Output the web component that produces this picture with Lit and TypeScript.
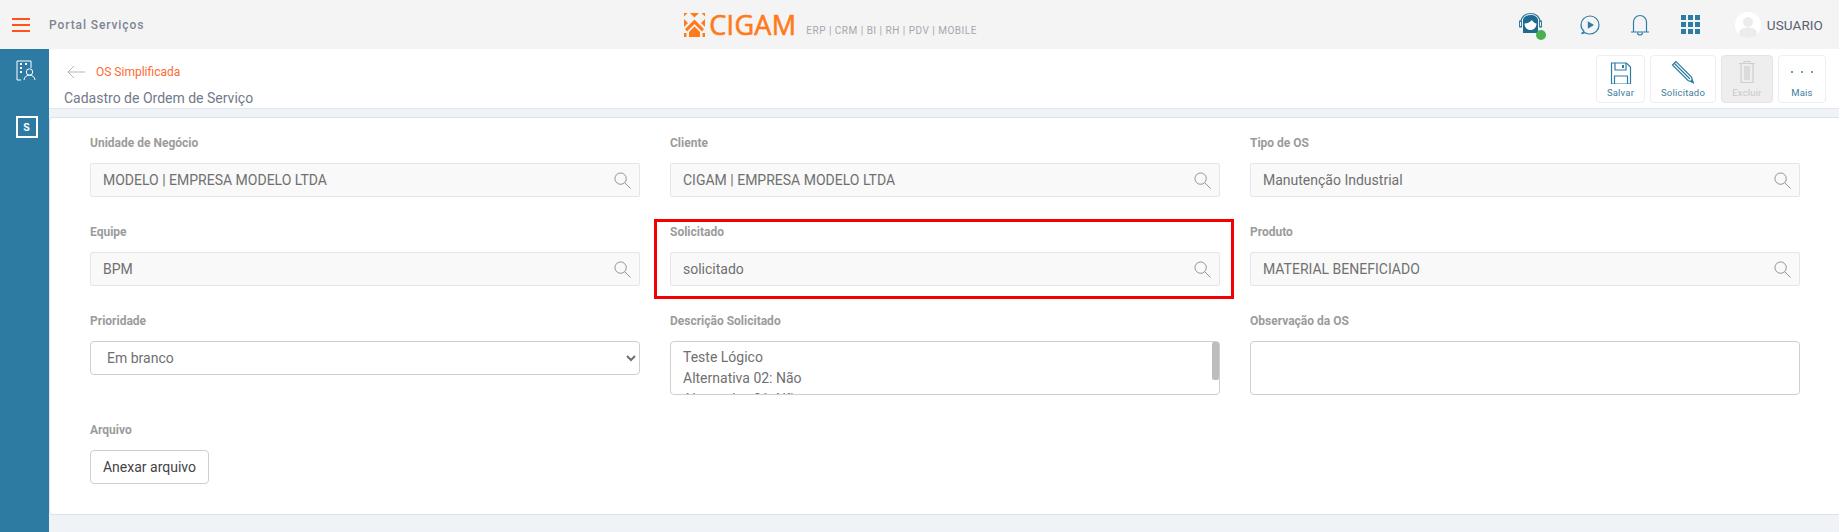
import { LitElement, html, css } from "lit";
import { customElement } from "lit/decorators.js";

const searchIcon = html`<svg class="search" viewBox="0 0 18 18" width="17" height="17" fill="none" stroke="#8c8c8c" stroke-width="1"><circle cx="7" cy="7" r="6"/><path d="M11.5 11.5 17.5 17.5"/></svg>`;

@customElement("app-root")
export class AppRoot extends LitElement {
  static styles = css`
    :host { display: block; width: 1839px; height: 532px; overflow: hidden; position: relative; font-family: Roboto, "Liberation Sans", sans-serif; background: #eff3f8; }
    * { box-sizing: border-box; }
    .topbar { height: 49px; background: #f4f4f4; display: flex; align-items: center; position: relative; }
    .burger { width: 18px; margin-left: 12px; display: flex; flex-direction: column; gap: 4px; }
    .burger i { display: block; height: 2px; background: #ff5317; }
    .title { margin-left: 19px; font-size: 12px; font-weight: 500; letter-spacing: 0.9px; color: #7d8492; }
    .brand { margin-left: 540px; display: flex; align-items: center; }
    .wordmark { font-family: "Open Sans", sans-serif; font-size: 27px; line-height: 27px; letter-spacing: 0.3px; color: #ff7a1a; margin-left: 4px; font-weight: 400; -webkit-text-stroke: 0.6px #ff7a1a; }
    .modules { margin-left: 10px; margin-top: 11px; font-size: 10px; letter-spacing: 0.5px; color: #a4a7ae; font-weight: 400; white-space: nowrap; }
    .tools { margin-left: auto; display: flex; align-items: center; }
    .agent { position: relative; width: 26px; height: 26px; margin-right: 36px; }
    .dot { position: absolute; left: 18px; top: 18px; width: 10px; height: 10px; border-radius: 50%; background: #4caf50; }
    .play { margin-right: 30px; }
    .bell { margin-right: 31px; }
    .apps { display: grid; grid-template-columns: repeat(3, 5px); grid-auto-rows: 5px; gap: 2px; margin-right: 35px; }
    .apps i { background: #2d7ca3; }
    .avatar { width: 26px; height: 26px; border-radius: 50%; background: #fff; overflow: hidden; margin-right: 6px; }
    .user { font-size: 13.5px; letter-spacing: 0.1px; color: #5a6070; margin-right: 16px; }

    .shell { display: flex; height: 483px; }
    .rail { width: 49px; background: #2d7ba3; display: flex; flex-direction: column; align-items: center; padding: 11px 0 0 4px; flex: none; }
    .s-box { margin-top: 35px; width: 22px; height: 22px; border: 2px solid #fff; color: #fff; font-size: 10px; font-weight: 700; font-family: Inter, sans-serif; display: flex; align-items: center; justify-content: center; }
    .main { flex: 1; min-width: 0; display: flex; flex-direction: column; }
    .sub { height: 60px; background: #fff; border-bottom: 1.5px solid #e2e6ea; display: flex; justify-content: space-between; padding: 6px 13px 0 15px; }
    .crumbs { display: flex; flex-direction: column; }
    .crumb-row { display: flex; align-items: center; height: 22px; padding-left: 3px; margin-top: 6px; }
    .crumb { margin-left: 11px; font-size: 12px; color: #ff6a33; }
    .page-title { font-size: 14px; color: #707a8a; margin-top: 7px; }
    .actions { display: flex; gap: 5px; }
    .act { height: 48px; border: 1px solid #eceef0; border-radius: 4px; background: #fff; display: flex; flex-direction: column; align-items: center; justify-content: flex-start; font-size: 9.5px; letter-spacing: 0.2px; color: #3f7d9d; padding: 4px 0 0; }
    .act svg { display: block; height: 24px; }
    .act span { margin-top: 3px; }
    .act.save { width: 49px; } .act.sol { width: 66px; } .act.del { width: 52px; background: #eee; color: #c9c9c9; border-color: #e4e4e4; } .act.more { width: 48px; }

    .card { margin: 8px 0 0 0; height: 398px; background: #fff; border: 1px solid #dfe2e6; border-right: 0; border-radius: 4px 0 0 4px; padding: 16px 39px 0 40px; position: relative; }
    .grid { display: grid; grid-template-columns: repeat(3, 550px); column-gap: 30px; row-gap: 26px; align-items: start; }
    .field { display: flex; flex-direction: column; }
    label { display: block; font-size: 12px; line-height: 16px; font-weight: 700; color: #9b9b9b; padding-top: 1px; margin-bottom: 12px; height: 17px; }
    .lookup { height: 34px; border: 1px solid #e6e6e6; border-radius: 2px; background: #f9f9f9; display: flex; align-items: center; justify-content: space-between; padding: 0 8px 0 12px; font-size: 14px; color: #707070; }
    .search { display: block; }
    select { height: 34px; width: 100%; border: 1px solid #cfcfcf; border-radius: 4px; background: #fff; font: 400 14px Roboto, sans-serif; color: #707070; padding: 0 8px 0 12px; }
    .area { position: relative; height: 54px; }
    textarea { display: block; height: 54px; width: 100%; resize: none; border: 1px solid #cfcfcf; border-radius: 4px; background: #fff; font: 400 14px/21px Roboto, sans-serif; color: #707070; padding: 5px 12px; overflow: hidden; margin: 0; }
    .thumb { position: absolute; right: 1px; top: 1px; width: 7px; height: 38px; border-radius: 2px; background: #bdbdbd; }
    .file { width: 119px; height: 34px; border: 1px solid #cfcfcf; border-radius: 4px; background: #fff; font: 400 14px Roboto, sans-serif; color: #444; padding: 0; }
    .mark { position: absolute; left: 604px; top: 101px; width: 580px; height: 80px; border: 3px solid #f40000; pointer-events: none; }
  `;

  lookup(labelText: string, value: string) {
    return html`<div class="field"><label>${labelText}</label><div class="lookup"><span>${value}</span>${searchIcon}</div></div>`;
  }

  render() {
    return html`
      <div class="topbar">
        <div class="burger"><i></i><i></i><i></i></div>
        <div class="title">Portal Serviços</div>
        <div class="brand">
          <svg width="21" height="24" viewBox="0 0 21 24" fill="#ff7a1a">
            <path d="M0 0h3.5L0 3.5z M21 0h-3.5L21 3.5z"/>
            <path d="M6 0h9l-4.5 4.5z"/>
            <path d="M0 6l4 4-4 4z M21 6l-4 4 4 4z"/>
            <path d="M10.5 6.5 20 16l-2 2.5-7.5-7.5L3 18.5 1 16z"/>
            <path d="M10.5 13.5 16 19v5H5v-5z"/>
            <path d="M0 20l2.5 0v4H0z M21 20l-2.5 0v4H21z"/>
          </svg>
          <span class="wordmark">CIGAM</span>
          <span class="modules">ERP | CRM | BI | RH | PDV | MOBILE</span>
        </div>
        <div class="tools">
          <div class="agent">
            <svg width="26" height="26" viewBox="0 0 26 26" fill="none">
              <path d="M3 10C3 4.5 7.5 1.5 12.5 1.5S22 4.5 22 10" stroke="#2d7ca3" stroke-width="1.2"/>
              <path d="M5 8.5C5 5 8.5 3 12.5 3S20 5 20 8.5V21H5z" fill="#1f6a90"/>
              <path d="M6.5 11.5C9 11.5 12 10.5 14 8C15 10 17 11.5 18.5 11.5 18.5 15.5 16 18 12.5 18S6.5 15.5 6.5 11.5z" fill="#fff"/>
              <rect x="1.5" y="9" width="2" height="6" stroke="#2d7ca3" stroke-width="1"/>
              <rect x="21.5" y="9" width="2" height="6" stroke="#2d7ca3" stroke-width="1"/>
            </svg>
            <div class="dot"></div>
          </div>
          <svg class="play" width="20" height="20" viewBox="0 0 20 20" fill="none" stroke="#2d7ca3" stroke-width="1.2">
            <path d="M4 16.2C2 14.6 1 12.4 1 10a9 9 0 1 1 9 9c-1.8 0-3.4-.4-4.8-1.3L1.5 18.6C2.8 17.6 3.6 17 4 16.2z"/>
            <path d="M7.8 6.2 14 10 7.8 13.8z" fill="#2d7ca3" stroke="none"/>
          </svg>
          <svg class="bell" width="20" height="22" viewBox="0 0 20 22" fill="none" stroke="#2d7ca3" stroke-width="1.2">
            <path d="M1 18h18M3.5 18V8a6.5 6.5 0 0 1 13 0v10"/>
            <path d="M7.5 18.5a2.5 2.5 0 0 0 5 0"/>
          </svg>
          <div class="apps">${Array.from({ length: 9 }, () => html`<i></i>`)}</div>
          <div class="avatar">
            <svg width="26" height="26" viewBox="0 0 26 26" fill="#ececec"><circle cx="13" cy="10" r="5"/><path d="M4 22c0-4.5 4-6.5 9-6.5s9 2 9 6.5c0 2-4 4-9 4s-9-2-9-4z"/></svg>
          </div>
          <div class="user">USUARIO</div>
        </div>
      </div>
      <div class="shell">
        <div class="rail">
          <svg width="21" height="21" viewBox="0 0 21 21" fill="none" stroke="#fff" stroke-width="1">
            <path d="M1 20V1h14v7M1 20h4"/>
            <path d="M4 4h2M9 4h2M4 8h2M4 12h2" stroke-width="2"/>
            <circle cx="13.5" cy="12" r="3.2"/>
            <path d="M8 20c.3-3 2.5-4.8 5.5-4.8s5.2 1.8 5.5 4.8"/>
          </svg>
          <div class="s-box">S</div>
        </div>
        <div class="main">
          <div class="sub">
            <div class="crumbs">
              <div class="crumb-row">
                <svg width="18" height="14" viewBox="0 0 18 14" fill="none" stroke="#b5b5b5" stroke-width="1"><path d="M18 7H1M7 1 1 7l6 6"/></svg>
                <span class="crumb">OS Simplificada</span>
              </div>
              <div class="page-title">Cadastro de Ordem de Serviço</div>
            </div>
            <div class="actions">
              <div class="act save">
                <svg width="22" height="24" viewBox="0 0 22 24" fill="none" stroke="#2d7ca3" stroke-width="1.2"><path d="M1.5 3h15l4 4v17h-19z"/><path d="M5 3v7h11V3"/><path d="M12 5h2v3h-2z" fill="#2d7ca3" stroke="none"/><path d="M4.5 24v-8h13v8"/></svg>
                <span>Salvar</span>
              </div>
              <div class="act sol">
                <svg width="24" height="24" viewBox="0 0 24 24" fill="none" stroke="#2d7ca3" stroke-width="1.2"><path d="M5 1.5 1.5 5 17 20.5l5 2-1.5-5.5z"/><path d="M3.5 3.5 19 19"/><path d="M20 21l2 1.5-.7-2.6z" fill="#2d7ca3"/></svg>
                <span>Solicitado</span>
              </div>
              <div class="act del">
                <svg width="18" height="24" viewBox="0 0 18 24" fill="none" stroke="#cfcfcf" stroke-width="1.2"><path d="M1 3.5h16M6 3.5V1.5h6v2M3 3.5v19h12v-19M7 6v14M9 6v14M11 6v14"/></svg>
                <span>Excluir</span>
              </div>
              <div class="act more">
                <svg width="24" height="24" viewBox="0 0 24 24" fill="#3f7d9d"><circle cx="2" cy="12" r="1"/><circle cx="12" cy="12" r="1"/><circle cx="22" cy="12" r="1"/></svg>
                <span>Mais</span>
              </div>
            </div>
          </div>
          <div class="card">
            <div class="grid">
              ${this.lookup("Unidade de Negócio", "MODELO | EMPRESA MODELO LTDA")}
              ${this.lookup("Cliente", "CIGAM | EMPRESA MODELO LTDA")}
              ${this.lookup("Tipo de OS", "Manutenção Industrial")}
              ${this.lookup("Equipe", "BPM")}
              ${this.lookup("Solicitado", "solicitado")}
              ${this.lookup("Produto", "MATERIAL BENEFICIADO")}
              <div class="field"><label>Prioridade</label><select><option>Em branco</option></select></div>
              <div class="field"><label>Descrição Solicitado</label><div class="area"><textarea readonly .value=${"Teste Lógico\nAlternativa 02: Não\nAlternativa 01: Não"}></textarea><div class="thumb"></div></div></div>
              <div class="field"><label>Observação da OS</label><div class="area"><textarea readonly></textarea></div></div>
              <div class="field"><label>Arquivo</label><button class="file">Anexar arquivo</button></div>
            </div>
            <div class="mark"></div>
          </div>
        </div>
      </div>
    `;
  }
}
